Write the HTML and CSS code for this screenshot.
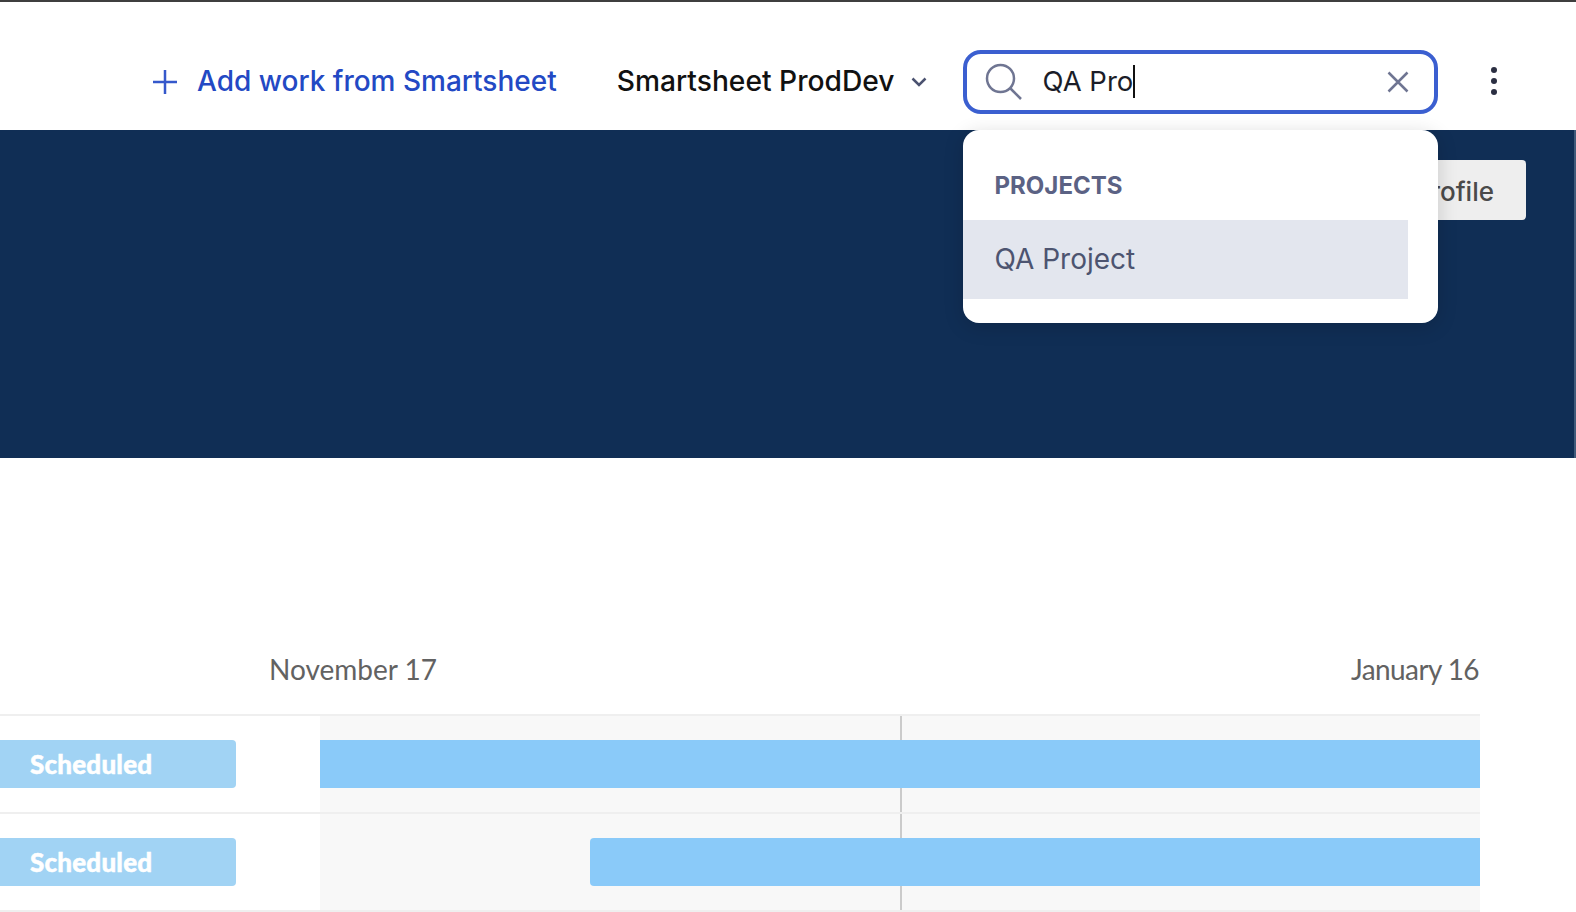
FILE: index.html
```html
<!DOCTYPE html>
<html lang="en">
<head>
  <meta charset="UTF-8" />
  <title>Smartsheet ProdDev</title>
  <link rel="stylesheet" href="styles.css">
</head>
<body>

  <header class="topbar">
    <a class="add-work" href="#">
      <svg class="icon-plus" viewBox="0 0 26 26" aria-hidden="true"><path d="M13 1v24M1 13h24"/></svg>
      <span class="topbar-text">Add work from Smartsheet</span>
    </a>
    <button class="account">
      <span class="topbar-text">Smartsheet ProdDev</span>
      <svg class="icon-chevron" viewBox="0 0 16 10" aria-hidden="true"><path d="M1.500 1.500 8 8l6.500-6.500"/></svg>
    </button>
    <div class="search">
      <div class="search-box">
        <svg class="icon-search" viewBox="0 0 38 38" aria-hidden="true">
          <circle cx="15.500" cy="15.500" r="13.500"/>
          <path d="M25 25l11 11"/>
        </svg>
        <span class="search-value">QA Pro</span>
        <svg class="icon-clear" viewBox="0 0 22 22" aria-hidden="true"><path d="M1.500 1.500l19 19M20.500 1.500l-19 19"/></svg>
      </div>
      <div class="search-menu">
        <div class="menu-heading">PROJECTS</div>
        <div class="menu-item">QA Project</div>
      </div>
    </div>
    <button class="more" aria-label="More">
      <span></span><span></span><span></span>
    </button>
  </header>

  <section class="hero">
    <button class="profile-btn">Edit profile</button>
  </section>

  <section class="timeline">
    <div class="dates">
      <span>November 17</span>
      <span class="date-end">January 16</span>
    </div>
    <div class="row">
      <div class="row-label"><span class="status">Scheduled</span></div>
      <div class="row-track"><div class="bar"></div></div>
    </div>
    <div class="row">
      <div class="row-label"><span class="status">Scheduled</span></div>
      <div class="row-track"><div class="bar bar-late"></div></div>
    </div>
  </section>

</body>
</html>
```

FILE: styles.css
```css
/* RESET */
* {
  margin: 0;
  padding: 0;
  box-sizing: border-box;
}

html, body {
  height: 100%;
  overflow: hidden;
  background: #fff;
  font-family: 'Inter', 'Liberation Sans', sans-serif;
}

button {
  border: none;
  background: none;
  font-family: inherit;
  cursor: pointer;
}

/* HEADER */
.topbar {
  height: 130px;
  border-top: 2px solid #3f3f3f;
  padding: 31px 0 0 152px;
  display: flex;
  align-items: center;
}

.topbar-text {
  padding-bottom: 2px;
}

.add-work {
  display: flex;
  align-items: center;
  gap: 19px;
  color: #2349c4;
  font-size: 28px;
  font-weight: 500;
  text-decoration: none;
}

.icon-plus {
  width: 26px;
  height: 26px;
  fill: none;
  stroke: #3558cb;
  stroke-width: 2.500;
}

.account {
  display: flex;
  align-items: center;
  gap: 16px;
  margin-left: 60px;
  color: #111;
  font-size: 28.200px;
  font-weight: 500;
}

.icon-chevron {
  width: 16px;
  height: 10px;
  fill: none;
  stroke: #4b5270;
  stroke-width: 2.500;
}

.search {
  position: relative;
  width: 475px;
  margin-left: 36px;
}

.search-box {
  height: 64px;
  border: 4px solid #3b5fd0;
  border-radius: 18px;
  display: flex;
  align-items: center;
  padding: 0 25px 0 18px;
}

.icon-search {
  width: 38px;
  height: 38px;
  fill: none;
  stroke: #6f7592;
  stroke-width: 2.500;
}

.search-value {
  flex: 1;
  display: flex;
  align-items: center;
  margin-left: 20px;
  padding-bottom: 2px;
  color: #1b1d28;
  font-size: 27.500px;
}

.search-value::after {
  content: '';
  width: 2px;
  height: 33px;
  margin-top: 2px;
  background: #111;
}

.icon-clear {
  width: 22px;
  height: 22px;
  fill: none;
  stroke: #6f7592;
  stroke-width: 2.500;
}

.search-menu {
  position: absolute;
  top: 80px;
  left: 0;
  right: 0;
  height: 193px;
  padding: 34px 30px 24px 0;
  background: #fff;
  border-radius: 16px;
  box-shadow: 0 4px 20px rgba(0, 0, 0, 0.16);
  z-index: 2;
}

.menu-heading {
  padding-left: 32px;
  color: #5b6284;
  font-size: 24px;
  font-weight: 700;
  line-height: 44px;
  height: 56px;
}

.menu-item {
  height: 79px;
  padding-left: 32px;
  background: #e3e6ee;
  color: #4d5470;
  font-size: 28px;
  line-height: 79px;
}

.more {
  display: flex;
  flex-direction: column;
  gap: 5px;
  margin: 0 0 1px 53px;
}

.more span {
  width: 6px;
  height: 6px;
  border-radius: 50%;
  background: #2b2f42;
}

/* HERO */
.hero {
  height: 328px;
  background: #102e55;
  border-right: 2px solid #3f5a7a;
  padding: 30px 48px 0 0;
  display: flex;
  justify-content: flex-end;
  align-items: flex-start;
}

.profile-btn {
  height: 60px;
  padding: 2px 32px 0;
  background: #eee;
  border-radius: 4px;
  color: #4a4a4a;
  font-size: 26px;
  font-weight: 500;
}

/* TIMELINE */
.timeline {
  margin-right: 96px;
  padding-top: 190px;
}

.dates {
  display: flex;
  justify-content: space-between;
  height: 66px;
  padding: 0 1px 0 269px;
  color: #626262;
  font-family: 'Lato', 'Liberation Sans', sans-serif;
  font-size: 28px;
  line-height: 42px;
}

.date-end {
  letter-spacing: -0.600px;
}

.row {
  display: flex;
  border-top: 2px solid #efefef;
  height: 98px;
}

.row:last-child {
  height: 100px;
  border-bottom: 2px solid #efefef;
}

.row-label {
  width: 320px;
  padding-top: 24px;
}

.status {
  display: block;
  width: 236px;
  height: 48px;
  padding-left: 30px;
  background: #a1d3f4;
  border-radius: 0 4px 4px 0;
  color: #fff;
  font-family: 'Lato', 'Liberation Sans', sans-serif;
  font-size: 26px;
  font-weight: 900;
  letter-spacing: 0.200px;
  line-height: 48px;
  -webkit-text-stroke: 0.500px #fff;
}

.row-track {
  flex: 1;
  position: relative;
  padding-top: 24px;
  background: #f8f8f8;
}

.row-track::before {
  content: '';
  position: absolute;
  top: 0;
  bottom: 0;
  left: 580px;
  width: 2px;
  background: #cbcbcb;
}

.bar {
  position: relative;
  height: 48px;
  background: #8acaf9;
}

.bar-late {
  margin-left: 270px;
  border-radius: 4px 0 0 4px;
}
```
